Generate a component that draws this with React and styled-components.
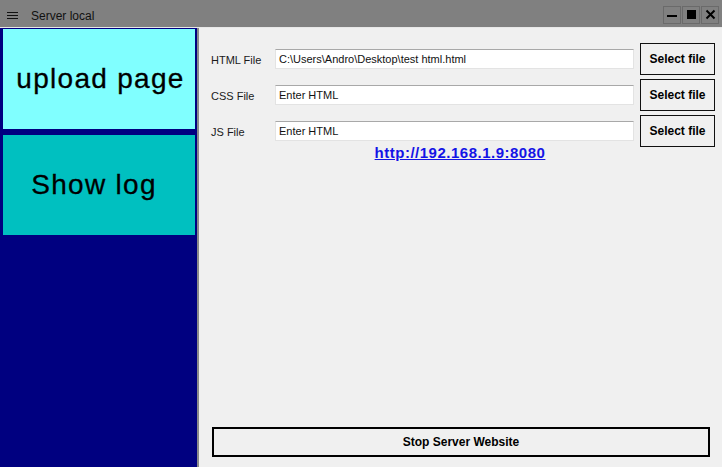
import React from 'react'
import styled, { createGlobalStyle } from 'styled-components'

const GlobalStyle = createGlobalStyle`
  html, body { margin: 0; padding: 0; }
  body { font-family: "Liberation Sans", Arial, sans-serif; background: #f0f0f0; }
`

const Window = styled.div`
  width: 722px;
  height: 467px;
  display: flex;
  flex-direction: column;
  overflow: hidden;
`

const TitleBar = styled.div`
  height: 27px;
  background: #808080;
  border-bottom: 1px solid #e8e8e8;
  display: flex;
  align-items: center;
  padding: 0 3px 0 7px;
  color: #111;
  font-size: 12px;
`

const Hamburger = styled.div`
  width: 11px;
  display: flex;
  flex-direction: column;
  gap: 2px;
  margin-right: 13px;
  margin-top: 3px;
  span { display: block; height: 1px; background: #111; }
`

const Title = styled.div`
  flex: 1;
  margin-top: 4px;
`

const Controls = styled.div`
  display: flex;
  gap: 1px;
  margin-top: 2px;
`

const CtrlBtn = styled.div`
  width: 18px;
  height: 18px;
  border: 1px solid #6a6a6a;
  display: flex;
  align-items: center;
  justify-content: center;
  box-sizing: border-box;
`

const Main = styled.div`
  flex: 1;
  display: flex;
  min-height: 0;
`

const Sidebar = styled.div`
  flex: 0 0 199px;
  background: #000080;
  border-right: 2px solid #8a8a8a;
  padding: 1px 2px 0 3px;
  box-sizing: border-box;
  display: flex;
  flex-direction: column;
  gap: 6px;
`

const NavButton = styled.div`
  width: 192px;
  height: 100px;
  background: ${p => p.$bg};
  display: flex;
  align-items: center;
  justify-content: center;
  padding-left: ${p => p.$shift || 0}px;
  padding-right: ${p => p.$shiftRight || 0}px;
  box-sizing: border-box;
  font-size: 28px;
  letter-spacing: 1.3px;
  -webkit-text-stroke: 0.3px #000;
  color: #000;
`

const Content = styled.div`
  flex: 1;
  min-width: 0;
  background: #f0f0f0;
  padding: 15px 7px 10px 12px;
  display: flex;
  flex-direction: column;
`

const Rows = styled.div`
  display: grid;
  grid-template-columns: 58px 359px 75px;
  grid-auto-rows: 32px;
  column-gap: 6px;
  row-gap: 4px;
  align-items: center;
`

const Label = styled.div`
  font-size: 11px;
  color: #1a1a1a;
  padding-top: 2px;
`

const Field = styled.div`
  height: 20px;
  background: #fff;
  border: 1px solid #e3e3e3;
  border-top-color: #a8a8a8;
  box-sizing: border-box;
  font-size: 11px;
  color: #111;
  padding: 3px 0 0 3px;
  white-space: nowrap;
  overflow: hidden;
`

const SelectBtn = styled.div`
  height: 32px;
  border: 1px solid #111;
  box-sizing: border-box;
  display: flex;
  align-items: center;
  justify-content: center;
  font-size: 12px;
  font-weight: bold;
  color: #000;
`

const Link = styled.a`
  align-self: center;
  margin-top: -3px;
  margin-right: 6px;
  font-size: 15px;
  letter-spacing: 0.5px;
  font-weight: bold;
  color: #1414e6;
  text-decoration: underline;
`

const StopButton = styled.div`
  margin-top: auto;
  margin-left: 1px;
  margin-right: 5px;
  height: 30px;
  border: 2px solid #000;
  box-sizing: border-box;
  display: flex;
  align-items: center;
  justify-content: center;
  font-size: 12px;
  font-weight: bold;
  color: #000;
`

const rows = [
  { label: 'HTML File', value: 'C:\\Users\\Andro\\Desktop\\test html.html' },
  { label: 'CSS File', value: 'Enter HTML' },
  { label: 'JS File', value: 'Enter HTML' },
]

export default function App() {
  return (
    <>
      <GlobalStyle />
      <Window>
        <TitleBar>
          <Hamburger><span /><span /><span /></Hamburger>
          <Title>Server local</Title>
          <Controls>
            <CtrlBtn>
              <svg width="11" height="11" viewBox="0 0 11 11"><rect x="0" y="6" width="10" height="2" fill="#000" /></svg>
            </CtrlBtn>
            <CtrlBtn>
              <svg width="11" height="11" viewBox="0 0 11 11"><rect x="1" y="1" width="9" height="9" fill="#000" /></svg>
            </CtrlBtn>
            <CtrlBtn>
              <svg width="11" height="11" viewBox="0 0 11 11"><path d="M1.5 1.5 L9.5 9.5 M9.5 1.5 L1.5 9.5" stroke="#000" strokeWidth="2" /></svg>
            </CtrlBtn>
          </Controls>
        </TitleBar>
        <Main>
          <Sidebar>
            <NavButton $bg="#80ffff" $shift={3}>upload page</NavButton>
            <NavButton $bg="#00c0c0" $shiftRight={10}>Show log</NavButton>
          </Sidebar>
          <Content>
            <Rows>
              {rows.map(r => (
                <React.Fragment key={r.label}>
                  <Label>{r.label}</Label>
                  <Field>{r.value}</Field>
                  <SelectBtn>Select file</SelectBtn>
                </React.Fragment>
              ))}
            </Rows>
            <Link href="#">http://192.168.1.9:8080</Link>
            <StopButton>Stop Server Website</StopButton>
          </Content>
        </Main>
      </Window>
    </>
  )
}
